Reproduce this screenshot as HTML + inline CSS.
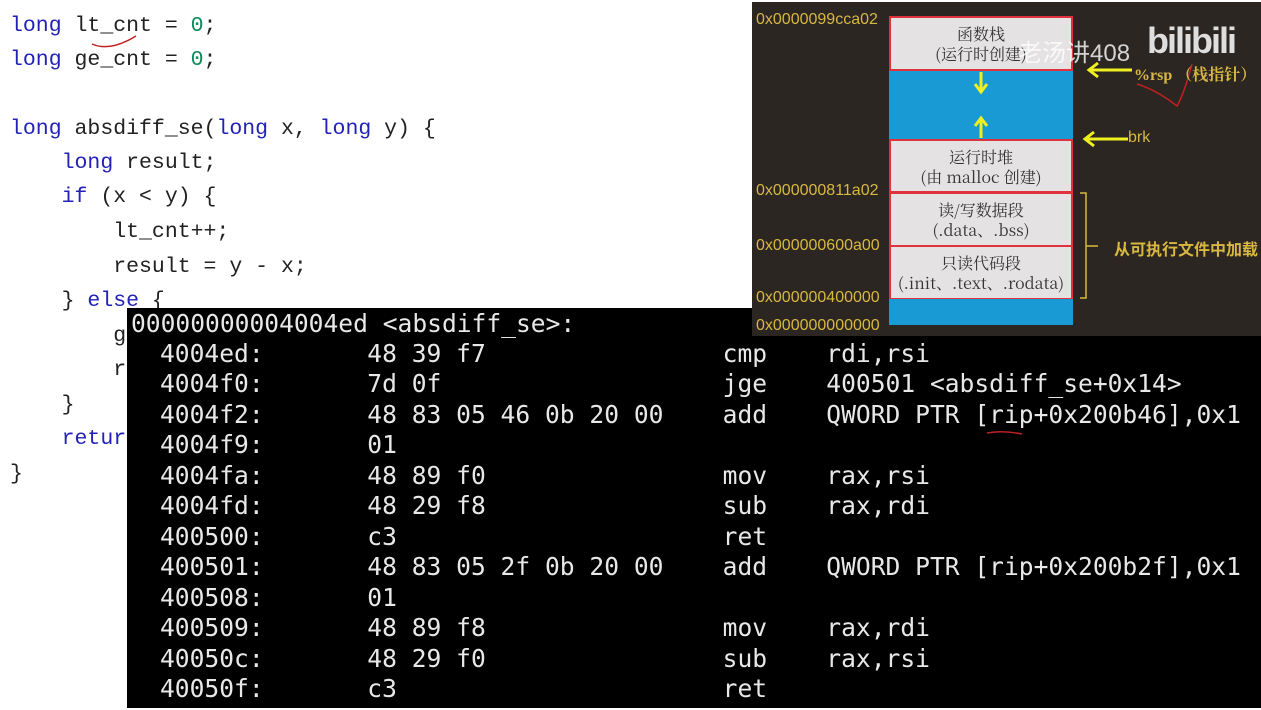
<!DOCTYPE html>
<html><head><meta charset="utf-8"><style>
*{margin:0;padding:0}
body{width:1261px;height:710px;background:#fff;position:relative;overflow:hidden;font-family:"Liberation Sans","Noto Sans CJK SC",sans-serif}
.c{position:absolute;left:10px;font-family:"Liberation Mono",monospace;font-size:21.5px;color:#222;white-space:pre;line-height:26px}
.k{color:#2222b8}.n{color:#0a8a5a}
#term{position:absolute;left:127px;top:308px;width:1134px;height:400px;background:#000}
.t{position:absolute;font-family:"DejaVu Sans Mono",monospace;font-size:24.6px;color:#e8e8e8;white-space:pre;line-height:30px}
#diag{position:absolute;left:752px;top:2px;width:509px;height:334px;background:#2b2622;z-index:2}
.a{position:absolute;left:4px;color:#d8b840;font-size:16px}
.b{position:absolute;left:137px;width:184px;background:#e4e2e2;border:2px solid #e0323c;box-sizing:border-box;text-align:center;color:#333;font-size:16px;line-height:20px;font-family:"Noto Serif CJK SC","Liberation Serif",serif}
.bl{position:absolute;left:137px;width:184px;background:#1a9ad4}
</style></head><body>
<div class="c" style="top:13px"><span class="k">long</span> lt_cnt = <span class="n">0</span>;</div>
<div class="c" style="top:47px"><span class="k">long</span> ge_cnt = <span class="n">0</span>;</div>
<div class="c" style="top:116px"><span class="k">long</span> absdiff_se(<span class="k">long</span> x, <span class="k">long</span> y) {</div>
<div class="c" style="top:150px">    <span class="k">long</span> result;</div>
<div class="c" style="top:184px">    <span class="k">if</span> (x &lt; y) {</div>
<div class="c" style="top:219px">        lt_cnt++;</div>
<div class="c" style="top:254px">        result = y - x;</div>
<div class="c" style="top:288px">    } <span class="k">else</span> {</div>
<div class="c" style="top:323px">        g</div>
<div class="c" style="top:357px">        r</div>
<div class="c" style="top:392px">    }</div>
<div class="c" style="top:426px">    <span class="k">retur</span></div>
<div class="c" style="top:461px">}</div>
<svg style="position:absolute;left:0;top:0" width="300" height="60"><path d="M92 44 Q110 52 136 36" stroke="#c02020" stroke-width="1.5" fill="none"/></svg>

<div id="diag">
<div class="a" style="top:9px">0x0000099cca02</div>
<div class="a" style="top:180px">0x000000811a02</div>
<div class="a" style="top:235px">0x000000600a00</div>
<div class="a" style="top:287px">0x000000400000</div>
<div class="a" style="top:315px">0x000000000000</div>
<div class="b" style="top:14px;height:55px;padding-top:6px">函数栈<br>(运行时创建)</div>
<div class="bl" style="top:69px;height:69px"></div>
<div class="b" style="top:137px;height:54px;padding-top:6px">运行时堆<br>(由 malloc 创建)</div>
<div class="b" style="top:190px;height:55px;padding-top:6px">读/写数据段<br>(.data、.bss)</div>
<div class="b" style="top:243px;height:55px;padding-top:6px">只读代码段<br>(.init、.text、.rodata)</div>
<div class="bl" style="top:297px;height:26px"></div>
<svg style="position:absolute;left:0;top:0" width="509" height="334">
<path d="M229 70 V88 M223 82 L229 90 L235 82" stroke="#f0f020" stroke-width="3" fill="none"/>
<path d="M229 136 V118 M223 124 L229 116 L235 124" stroke="#f0f020" stroke-width="3" fill="none"/>
<path d="M380 68 H338 M346 61 L337 68 L346 75" stroke="#f0f020" stroke-width="3" fill="none"/>
<path d="M376 137 H334 M342 130 L333 137 L342 144" stroke="#f0f020" stroke-width="3" fill="none"/>
<path d="M328 191 H334 V296 H328 M334 244 H346" stroke="#d8b840" stroke-width="1.5" fill="none"/>
<path d="M385 82 Q405 88 425 104 Q432 92 440 62" stroke="#c02020" stroke-width="1.5" fill="none"/>
</svg>
<div style="position:absolute;left:382px;top:60px;white-space:nowrap;color:#d8b840;font-size:16px;font-family:'Liberation Serif','Noto Serif CJK SC',serif;font-weight:bold">%rsp （栈指针）</div>
<div style="position:absolute;left:376px;top:127px;color:#d8b840;font-size:16px">brk</div>
<div style="position:absolute;left:362px;top:234px;white-space:nowrap;color:#d8b840;font-size:16px;font-weight:bold">从可执行文件中加载</div>
<div style="position:absolute;left:266px;top:31px;white-space:nowrap;color:rgba(255,255,255,0.8);font-size:24px">老汤讲408</div>
<div style="position:absolute;left:395px;top:18px;color:rgba(255,255,255,0.85);font-size:36px;font-weight:bold;letter-spacing:-2px">bilibili</div>
</div>

<div id="term">
<div class="t" style="left:4px;top:1px">00000000004004ed &lt;absdiff_se&gt;:</div>
<div class="t" style="left:33px;top:31px">4004ed:       48 39 f7                cmp    rdi,rsi</div>
<div class="t" style="left:33px;top:61px">4004f0:       7d 0f                   jge    400501 &lt;absdiff_se+0x14&gt;</div>
<div class="t" style="left:33px;top:92px">4004f2:       48 83 05 46 0b 20 00    add    QWORD PTR [rip+0x200b46],0x1</div>
<div class="t" style="left:33px;top:122px">4004f9:       01</div>
<div class="t" style="left:33px;top:153px">4004fa:       48 89 f0                mov    rax,rsi</div>
<div class="t" style="left:33px;top:183px">4004fd:       48 29 f8                sub    rax,rdi</div>
<div class="t" style="left:33px;top:214px">400500:       c3                      ret</div>
<div class="t" style="left:33px;top:244px">400501:       48 83 05 2f 0b 20 00    add    QWORD PTR [rip+0x200b2f],0x1</div>
<div class="t" style="left:33px;top:275px">400508:       01</div>
<div class="t" style="left:33px;top:305px">400509:       48 89 f8                mov    rax,rdi</div>
<div class="t" style="left:33px;top:336px">40050c:       48 29 f0                sub    rax,rsi</div>
<div class="t" style="left:33px;top:366px">40050f:       c3                      ret</div>
<svg style="position:absolute;left:0;top:0" width="1134" height="400"><path d="M860 125 Q875 122 895 126" stroke="#c02020" stroke-width="1.5" fill="none"/></svg>
</div>
</body></html>
